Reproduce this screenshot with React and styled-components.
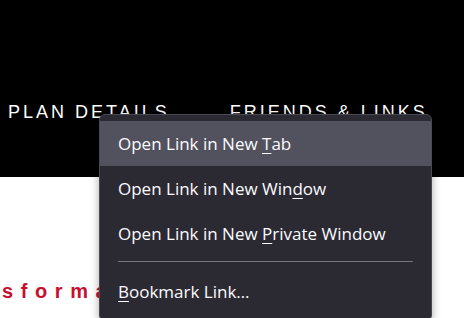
import React from "react";
import styled, { createGlobalStyle } from "styled-components";

const Global = createGlobalStyle`
  html, body { margin: 0; padding: 0; background: #fff; overflow: hidden; }
  body { width: 464px; height: 318px; }
`;

const Page = styled.div`
  position: relative;
  width: 464px;
  height: 318px;
  overflow: hidden;
  background: #fff;
`;

const Header = styled.header`
  height: 177px;
  background: #000;
  display: flex;
  align-items: flex-start;
  padding: 102px 0 0 8px;
  box-sizing: border-box;
  gap: 60px;
`;

const NavLink = styled.span`
  font-family: "Liberation Sans", Arial, sans-serif;
  font-size: 18px;
  letter-spacing: 3px;
  color: #fff;
  white-space: nowrap;
`;

const Content = styled.main`
  padding: 103px 0 0 2px;
`;

const Headline = styled.div`
  font-family: "Liberation Sans", Arial, sans-serif;
  font-weight: 700;
  font-size: 20px;
  letter-spacing: 7.6px;
  color: #c8102e;
  white-space: nowrap;
`;

const Menu = styled.ul`
  position: absolute;
  left: 99px;
  top: 114px;
  width: 333px;
  margin: 0;
  padding: 6px 0;
  list-style: none;
  background: #2b2a33;
  border: 1px solid #4a4953;
  border-radius: 6px;
  box-sizing: border-box;
  box-shadow: 0 2px 8px rgba(0, 0, 0, 0.35);
`;

const Item = styled.li`
  height: 45px;
  display: flex;
  align-items: center;
  padding-left: 18px;
  font-family: "Open Sans", "Noto Sans", sans-serif;
  font-size: 17px;
  color: #fbfbfe;
  background: ${(p) => (p.$active ? "#52525e" : "transparent")};
  white-space: pre;
`;

const Label = styled.span`
  white-space: pre;
`;

const Key = styled.span`
  text-decoration: underline;
  text-underline-offset: 3px;
  text-decoration-thickness: 1px;
`;

const Separator = styled.li`
  height: 1px;
  margin: 5px 18px 7px 18px;
  background: #77767f;
`;

export default function App() {
  return (
    <Page>
      <Global />
      <Header>
        <NavLink>PLAN DETAILS</NavLink>
        <NavLink>FRIENDS &amp; LINKS</NavLink>
      </Header>
      <Content>
        <Headline>sforma</Headline>
      </Content>
      <Menu>
        <Item $active>
          <Label>
            {"Open Link in New "}<Key>T</Key>ab
          </Label>
        </Item>
        <Item>
          <Label>
            {"Open Link in New Win"}<Key>d</Key>ow
          </Label>
        </Item>
        <Item>
          <Label>
            {"Open Link in New "}<Key>P</Key>rivate Window
          </Label>
        </Item>
        <Separator />
        <Item>
          <Label>
            <Key>B</Key>ookmark Link…
          </Label>
        </Item>
      </Menu>
    </Page>
  );
}
